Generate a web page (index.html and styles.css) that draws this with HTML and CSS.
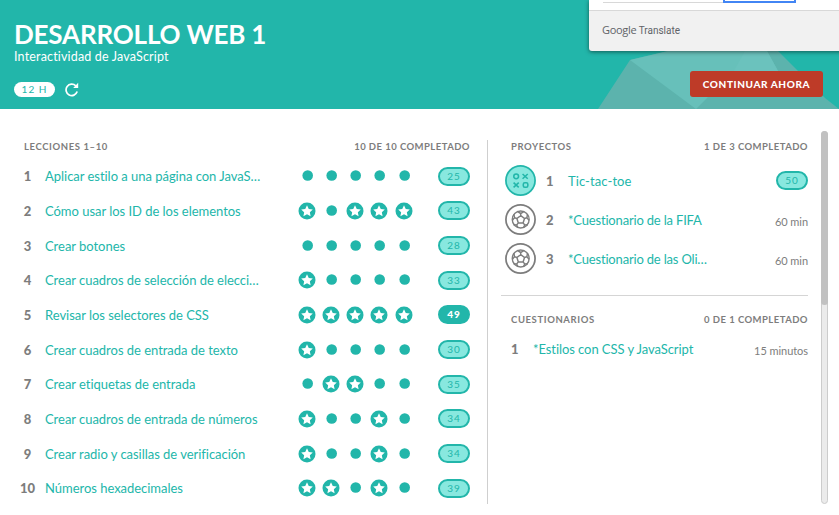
FILE: index.html
```
<!DOCTYPE html>
<html lang="es">
<head>
<meta charset="utf-8">
<title>Desarrollo web 1</title>
<link rel="stylesheet" href="styles.css">
</head>
<body>
<svg class="defs" width="0" height="0" aria-hidden="true">
  <symbol id="star" viewBox="0 0 18 18"><circle cx="9" cy="9" r="8.5" fill="#22b6aa"/><path d="M9 3.2l1.75 3.7 4.05.55-2.95 2.8.75 4L9 12.3l-3.6 1.95.75-4-2.95-2.8 4.05-.55z" fill="#fff"/></symbol>
  <symbol id="dot" viewBox="0 0 18 18"><circle cx="9.7" cy="8.5" r="5.3" fill="#22b6aa"/></symbol>
  <symbol id="ball" viewBox="0 0 30 30"><g fill="none" stroke="#7d7d7d"><circle cx="15" cy="15" r="14.1" stroke-width="1.7"/><circle cx="15.2" cy="15" r="8.2" stroke-width="1.3"/><path d="M15.2 11.300l3.700 2.700-1.400 4.300h-4.600L11.500 14zM15.200 11.300V9.200l-3.300-2M15.200 9.200l3.300-2M18.900 14l2.300-.8.600-3.500M21.200 13.200l2 2.600M17.500 18.300l1.600 2 3.100-.3M19.100 20.300l-1.100 2.300M12.900 18.300l-1.600 2-3.100-.3M11.300 20.300l1.100 2.300M11.500 14l-2.300-.8-.6-3.500M9.200 13.200l-2 2.600" stroke-width="1.4"/></g></symbol>
</svg>
<header class="hero">
  <svg class="facets" viewBox="0 0 241 58" width="241" height="58">
    <path d="M0 58L32 9 70 0h110l47 47 14 11z" fill="#5cb3ad"/>
    <path d="M32 9L70 0h99l11 20-70 26-12 12z" fill="#67c0ba"/>
    <path d="M147 0h22l11 20h-44z" fill="#6bc2bd"/>
  </svg>
  <div class="intro">
    <h1>DESARROLLO WEB 1</h1>
    <p>Interactividad de JavaScript</p>
    <div class="meta"><span class="hours">12 H</span>
      <svg width="14" height="15" viewBox="0 0 14 15"><path d="M12.200 9.600A5.700 5.700 0 1 1 10.800 3.800" fill="none" stroke="#fff" stroke-width="1.700"/><path d="M13.200.8V6H8.200z" fill="#fff"/></svg>
    </div>
  </div>
  <button class="continue">CONTINUAR AHORA</button>
  <aside class="translate"><div class="translate-top"><i class="field"></i><i class="choice"></i></div><div class="translate-foot"><b>Google</b> Translate</div></aside>
</header>
<main>
  <section class="lessons">
    <div class="head"><h2>LECCIONES 1–10</h2><h2 class="tight">10 DE 10 COMPLETADO</h2></div>
    <ol id="lessons"></ol>
  </section>
  <div class="side">
    <section class="projects">
      <div class="head"><h2>PROYECTOS</h2><h2 class="tight">1 DE 3 COMPLETADO</h2></div>
      <div class="project"><svg width="31" height="31" viewBox="0 0 30 30"><circle cx="15" cy="15" r="14.100" fill="#88e8df" stroke="#22b6aa" stroke-width="1.700"/><g fill="none" stroke="#22b6aa" stroke-width="1.500"><circle cx="10.800" cy="11" r="2.300"/><path d="M17 8.700l5 4.600M22 8.700l-5 4.600M8.300 17l5 4.600M13.300 17l-5 4.600"/><rect x="17.700" y="17.200" width="4.400" height="4.400" rx="1.500"/></g></svg><b>1</b><a class="tictactoe">Tic-tac-toe</a><span class="score">50</span></div>
      <div class="project"><svg width="31" height="31"><use href="#ball"/></svg><b>2</b><a>*Cuestionario de la FIFA</a><span class="time">60 min</span></div>
      <div class="project"><svg width="31" height="31"><use href="#ball"/></svg><b>3</b><a>*Cuestionario de las Oli…</a><span class="time">60 min</span></div>
    </section>
    <section class="quizzes">
      <div class="head"><h2>CUESTIONARIOS</h2><h2 class="tight">0 DE 1 COMPLETADO</h2></div>
      <div class="quiz"><b>1</b><a>*Estilos con CSS y JavaScript</a><span class="time">15 minutos</span></div>
    </section>
  </div>
  <div class="track"><div class="thumb"></div></div>
</main>
<script src="app.js"></script>
</body>
</html>
```
FILE: styles.css
```
* { box-sizing: border-box; }
body { margin: 0; width: 839px; height: 515px; overflow: hidden; background: #fff; color: #7d7d7d; font-family: Lato, "Open Sans", sans-serif; font-variant-ligatures: none; }
h1, h2, p, ol { margin: 0; padding: 0; }
.defs { position: absolute; }
.hero { position: relative; height: 109px; background: #22b6aa; color: #fff; display: flex; justify-content: space-between; }
.facets { position: absolute; right: 0; bottom: 0; }
.intro { padding: 21px 0 0 14px; }
h1 { font-size: 26px; line-height: 26px; font-weight: 700; letter-spacing: -.18px; white-space: nowrap; }
.intro p { font-size: 12.500px; line-height: 14px; letter-spacing: .17px; margin-top: 3px; }
.meta { display: flex; align-items: center; gap: 10px; margin-top: 17px; height: 16px; }
.hours { width: 41px; height: 15px; border-radius: 8px; background: #fff; color: #22b6aa; font-size: 10px; line-height: 15px; letter-spacing: 1px; text-align: center; }
.continue { position: relative; width: 133px; height: 26px; margin: 71px 16px 0 0; padding: 0; border: 0; border-radius: 3px; background: #be3b28; color: #fff; font: 900 10px/26px Lato, sans-serif; letter-spacing: .6px; white-space: nowrap; }
.translate { position: absolute; left: 589px; top: 0; width: 260px; height: 51px; background: #f1f1f1; border-radius: 0 0 3px 3px; box-shadow: 0 1px 4px rgba(0,0,0,.5); overflow: hidden; }
.translate-top { height: 11px; padding-left: 14px; background: #fff; border-bottom: 1px solid #d8d8d8; display: flex; align-items: flex-start; }
.field { width: 120px; height: 3px; border-bottom: 1px solid #d8d8d8; }
.choice { width: 73px; height: 3px; border: 2px solid #4285f4; border-top: 0; }
.translate-foot { padding-left: 13px; font: 10px/38px Roboto, sans-serif; color: #5f6368; letter-spacing: 0; }
.translate-foot b { font: 500 11px/38px "Open Sans", sans-serif; letter-spacing: -.3px; }
main { display: flex; height: 406px; }
.lessons { width: 488px; height: 364px; margin-top: 31px; padding: 0 17px 0 17px; border-right: 1px solid #cfcfcf; }
.head { display: flex; justify-content: space-between; height: 12px; }
h2 { font-size: 9.500px; line-height: 13px; font-weight: 700; letter-spacing: .6px; white-space: nowrap; }
h2.tight { letter-spacing: .45px; }
.lessons .head { padding-left: 7px; }
ol { list-style: none; margin-top: 7px; }
.lesson { display: grid; grid-template-columns: 21px 1fr 138px 32px; height: 34.670px; align-items: center; }
.lesson b { text-align: center; }
.lesson a { padding-left: 7px; }
b { font-size: 13px; font-weight: 900; }
a { font-size: 13px; color: #22b6aa; white-space: nowrap; letter-spacing: -.03px; }
.marks { display: flex; gap: 6.150px; margin-left: -2px; }
.marks svg { flex: none; display: block; }
.score { display: block; width: 32px; height: 19px; border: 2px solid #22b6aa; border-radius: 10px; background: #88e8df; color: #22b6aa; font-size: 10px; line-height: 15px; text-align: center; letter-spacing: 1px; }
.score.full { background: #22b6aa; color: #fff; font-weight: 900; }
.side { width: 320px; padding: 31px 0 0 13px; }
.side .head { padding-left: 10px; }
.projects { height: 156px; border-bottom: 1px solid #d5d5d5; }
.projects .head { margin-bottom: 9px; }
.project { display: flex; align-items: center; height: 39px; padding-left: 4px; }
.project b { width: 10px; margin-left: 10px; }
.project a { margin-left: 12px; letter-spacing: -.18px; }
.project a.tictactoe { letter-spacing: .08px; }
.project .score, .time { margin-left: auto; }
.time { font-size: 11px; padding-top: 3px; white-space: nowrap; letter-spacing: -.05px; }
.quizzes { padding-top: 17px; }
.quiz { display: flex; align-items: center; height: 36px; margin-top: 6px; padding-left: 10px; }
.quiz b { width: 22px; }
.quiz a { letter-spacing: -.07px; }
.track { width: 7px; height: 373px; margin: 22px 0 0 13px; border: 1px solid #ccc; border-radius: 4px; background: #ebebeb; }
.thumb { width: 7px; height: 174px; margin: -1px; background: #c1c1c1; border-radius: 4px; }
```
FILE: app.js
```
const lessons = [
  ["Aplicar estilo a una página con JavaS…", "00000", 25],
  ["Cómo usar los ID de los elementos", "10111", 43],
  ["Crear botones", "00000", 28],
  ["Crear cuadros de selección de elecci…", "10000", 33],
  ["Revisar los selectores de CSS", "11111", 49],
  ["Crear cuadros de entrada de texto", "10000", 30],
  ["Crear etiquetas de entrada", "01100", 35],
  ["Crear cuadros de entrada de números", "10010", 34],
  ["Crear radio y casillas de verificación", "10010", 34],
  ["Números hexadecimales", "11010", 39]
];
document.getElementById("lessons").innerHTML = lessons.map(([title, marks, score], i) =>
  `<li class="lesson"><b>${i + 1}</b><a>${title}</a><span class="marks">${[...marks].map(m =>
    `<svg width="18" height="18"><use href="#${m === "1" ? "star" : "dot"}"/></svg>`).join("")}</span><span class="score${score === 49 ? " full" : ""}">${score}</span></li>`).join("");
```
